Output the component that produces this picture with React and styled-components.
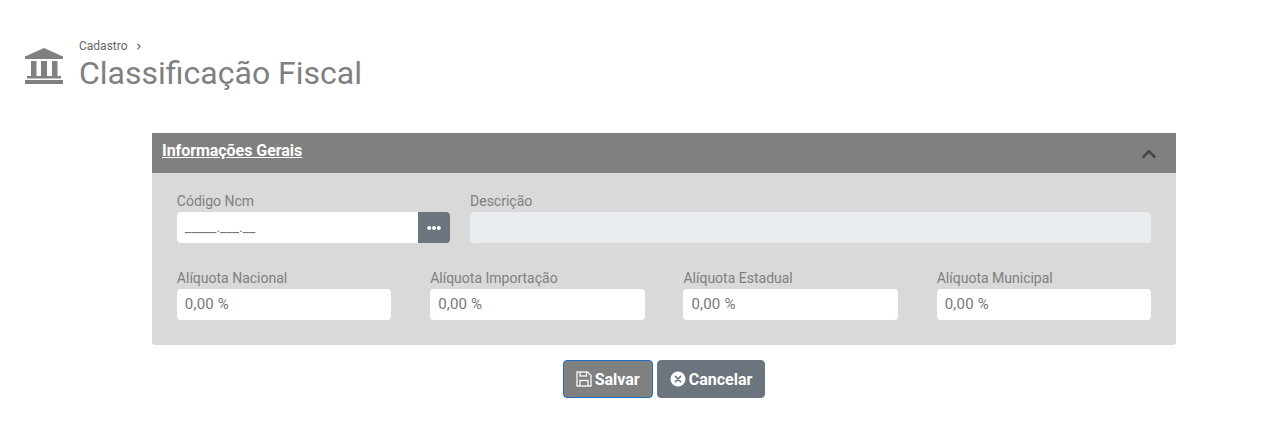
import React from 'react';
import styled, {createGlobalStyle} from 'styled-components';
import {FaChevronRight, FaChevronUp, FaEllipsisH} from 'react-icons/fa';

const GlobalStyle = createGlobalStyle`
  html, body {
    margin: 0;
    background: #fff;
    font-family: Roboto, "Liberation Sans", sans-serif;
  }
`;

const Page = styled.div`
  width: 1286px;
  height: 443px;
  padding: 39px 0 0 25px;
  box-sizing: border-box;
  overflow: hidden;
`;

const PageHeader = styled.header`
  display: flex;
  align-items: flex-start;
  height: 94px;
`;

const HeaderIcon = styled.svg`
  flex: none;
  width: 38px;
  height: 36px;
  margin: 9px 16px 0 0;
  fill: #808080;
`;

const Crumb = styled.div`
  display: flex;
  align-items: center;
  gap: 8px;
  height: 15px;
  font-size: 12px;
  line-height: 15px;
  color: #666;
  svg {
    width: 6px;
    height: 7px;
  }
`;

const Title = styled.h1`
  margin: 0;
  font-size: 32px;
  font-weight: 400;
  line-height: 38px;
  color: #808080;
`;

const Panel = styled.section`
  width: 1024px;
  margin-left: 127px;
  border-radius: 0 0 3px 3px;
  background: #d9d9d9;
`;

const PanelHeader = styled.div`
  display: flex;
  align-items: center;
  justify-content: space-between;
  height: 40px;
  padding: 0 19px 0 10px;
  background: #808080;
`;

const PanelTitle = styled.span`
  font-size: 16px;
  font-weight: 700;
  letter-spacing: -0.05px;
  color: #fff;
  text-decoration: underline;
  margin-top: -6px;
`;

const Collapse = styled(FaChevronUp)`
  width: 16px;
  height: 16px;
  margin-top: 2px;
  color: #3f454b;
`;

const PanelBody = styled.div`
  display: flex;
  flex-direction: column;
  gap: 26px;
  padding: 19px 24.85px 25px;
`;

const TopRow = styled.div`
  display: flex;
  gap: 20px;
`;

const RateRow = styled.div`
  display: grid;
  grid-template-columns: repeat(4, 1fr);
  column-gap: 38.9px;
`;

const Field = styled.div`
  display: flex;
  flex-direction: column;
  flex: ${props => props.$flex || 'none'};
  width: ${props => props.$width || 'auto'};
`;

const Label = styled.label`
  height: 18px;
  margin-bottom: 2px;
  font-size: 14px;
  line-height: 19px;
  color: #808080;
`;

const InputGroup = styled.div`
  display: flex;
`;

const Input = styled.div`
  flex: 1;
  height: 31px;
  padding: 0 8px;
  box-sizing: border-box;
  border-radius: ${props => props.$joined ? '4px 0 0 4px' : '4px'};
  background: ${props => props.$disabled ? '#e9ecef' : '#fff'};
  font-size: ${props => props.$joined ? '14px' : '15px'};
  letter-spacing: ${props => props.$joined ? '0' : '0.2px'};
  line-height: 31px;
  color: #777;
`;

const MoreButton = styled.button`
  display: flex;
  align-items: center;
  justify-content: center;
  width: 32px;
  height: 31px;
  padding: 0;
  border: 0;
  border-radius: 0 4px 4px 0;
  background: #6c757d;
  color: #fff;
  svg {
    width: 14px;
    height: 14px;
  }
`;

const Actions = styled.div`
  display: flex;
  justify-content: center;
  gap: 4px;
  width: 1024px;
  margin: 15px 0 0 127px;
`;

const Button = styled.button`
  display: flex;
  align-items: center;
  gap: 3px;
  height: 38px;
  padding: 0 12px;
  box-sizing: border-box;
  border: 1px solid ${props => props.$primary ? '#1b6ec2' : '#6c757d'};
  border-radius: 4px;
  background: ${props => props.$primary ? '#808080' : '#6c757d'};
  color: #fff;
  font-family: inherit;
  font-size: 16px;
  font-weight: 700;
  svg {
    flex: none;
    width: 16px;
    height: 16px;
  }
`;

const BankIcon = () => (
    <HeaderIcon viewBox="0 0 38 36">
        <path d="M0 8.5 19 0l19 8.5V11H0z"/>
        <path d="M6 13h5.5v15H6zM16 13h6v15h-6zM27 13h5.5v15H27z"/>
        <path d="M2 28h34v2.5H2zM0 32h38v4H0z"/>
    </HeaderIcon>
);

const SaveIcon = () => (
    <svg viewBox="0 0 16 16" fill="none" stroke="#f0f0f0" strokeWidth="1.4">
        <path d="M1 1h10.5L15 4.5V15H1z"/>
        <path d="M4 1v4h6.5V1M4 15V9.5h8V15"/>
    </svg>
);

const CancelIcon = () => (
    <svg viewBox="0 0 16 16">
        <circle cx="8" cy="8" r="7.5" fill="#fff"/>
        <path d="M5.4 5.4l5.2 5.2M10.6 5.4l-5.2 5.2" stroke="#6c757d" strokeWidth="1.5" strokeLinecap="round"/>
    </svg>
);

const rates = ['Alíquota Nacional', 'Alíquota Importação', 'Alíquota Estadual', 'Alíquota Municipal'];

const App = () => {
    return (
        <Page>
            <GlobalStyle/>
            <PageHeader>
                <BankIcon/>
                <div>
                    <Crumb>Cadastro <FaChevronRight/></Crumb>
                    <Title>Classificação Fiscal</Title>
                </div>
            </PageHeader>
            <Panel>
                <PanelHeader>
                    <PanelTitle>Informações Gerais</PanelTitle>
                    <Collapse/>
                </PanelHeader>
                <PanelBody>
                    <TopRow>
                        <Field $width="273.2px">
                            <Label>Código Ncm</Label>
                            <InputGroup>
                                <Input $joined>_____.___.__</Input>
                                <MoreButton><FaEllipsisH/></MoreButton>
                            </InputGroup>
                        </Field>
                        <Field $flex="1">
                            <Label>Descrição</Label>
                            <Input $disabled/>
                        </Field>
                    </TopRow>
                    <RateRow>
                        {rates.map(rate => (
                            <Field key={rate}>
                                <Label>{rate}</Label>
                                <Input>0,00 %</Input>
                            </Field>
                        ))}
                    </RateRow>
                </PanelBody>
            </Panel>
            <Actions>
                <Button $primary><SaveIcon/>Salvar</Button>
                <Button><CancelIcon/>Cancelar</Button>
            </Actions>
        </Page>
    );
};

export default App;
